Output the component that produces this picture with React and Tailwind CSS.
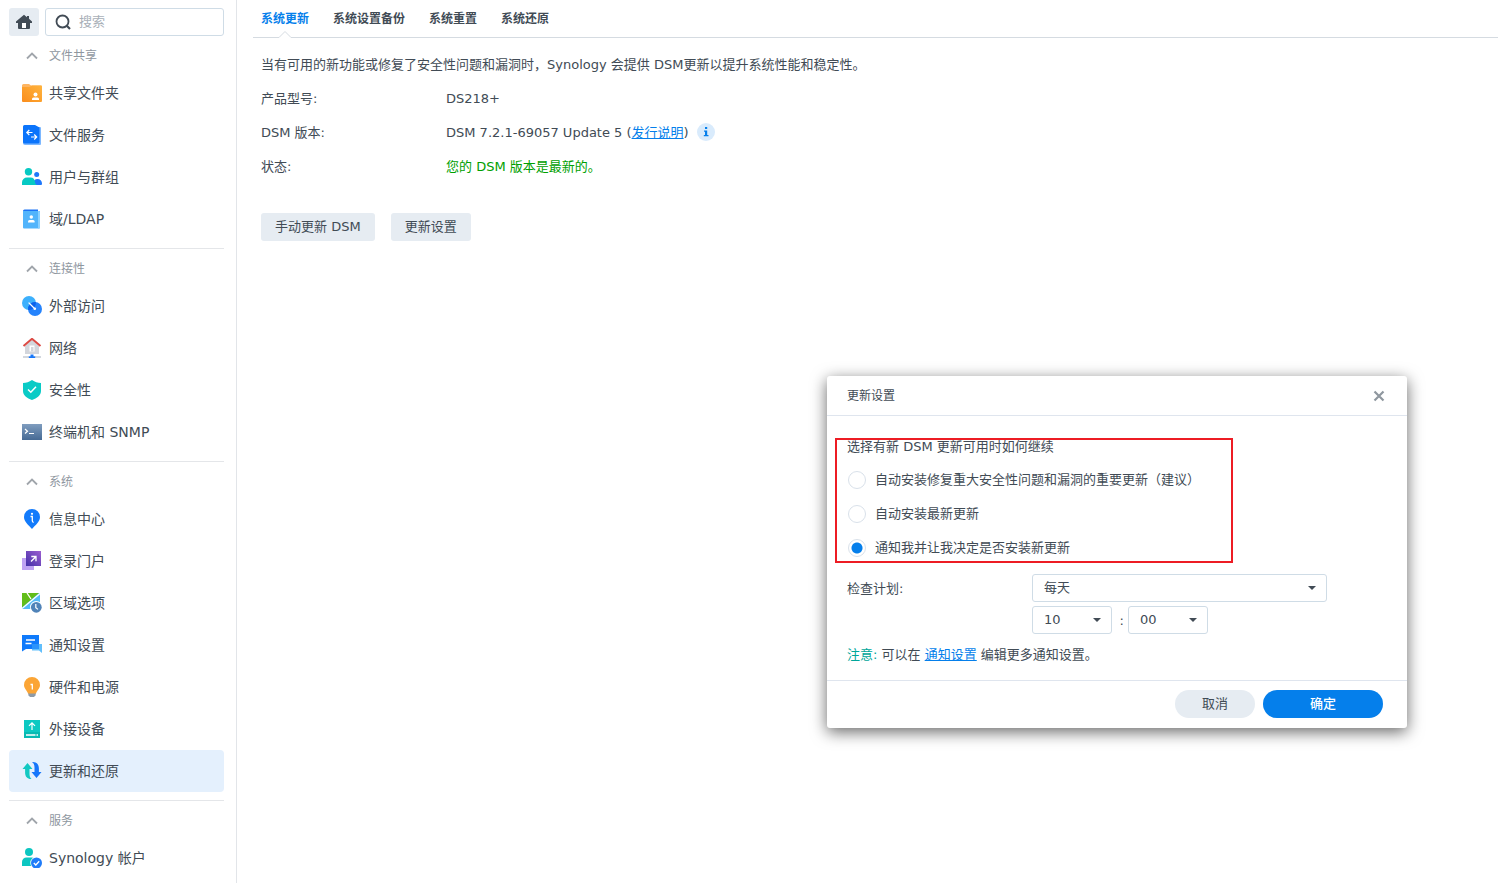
import { useState } from 'react'
import clsx from 'clsx'

/* Sidebar icons, all on a 20x20 grid */
function SharedFolderIcon() {
  return (
    <>
      <path d="M0 2.500A1.500 1.500 0 0 1 1.500 1H7l2 1.500h10.500V8H0z" fill="#fdb562" />
      <defs>
        <linearGradient id="folder" x1="0" y1="1" x2="1" y2="0">
          <stop offset="0" stopColor="#fa8d1c" />
          <stop offset="1" stopColor="#ffb43e" />
        </linearGradient>
      </defs>
      <path d="M0 4h7.500L10 2.500h9A1 1 0 0 1 20 3.500V18a1 1 0 0 1-1 1H1a1 1 0 0 1-1-1z" fill="url(#folder)" />
      <circle cx="13.500" cy="11.500" r="2" fill="#fff" />
      <path d="M10 17v-1a1.500 1.500 0 0 1 1.500-1.500h4A1.500 1.500 0 0 1 17 16v1z" fill="#fff" />
    </>
  )
}

function FileServiceIcon() {
  return (
    <>
      <path d="M3 2h15a1 1 0 0 1 1 1v16a1 1 0 0 1-1 1H3a2 2 0 0 1-2-2z" fill="#7db8ff" />
      <path d="M1 1.500A1.500 1.500 0 0 1 2.500 0H13l4.500 2.500V17a1.500 1.500 0 0 1-1.500 1.500H2.500A1.500 1.500 0 0 1 1 17z" fill="#0b74fb" />
      <path d="M10.500 7.500H5M7.300 5 4.800 7.500 7.300 10M9 12h5.500M12.200 9.500l2.500 2.500-2.500 2.500" fill="none" stroke="#fff" strokeWidth="1.200" />
    </>
  )
}

function UsersIcon() {
  return (
    <>
      <circle cx="6.500" cy="4.700" r="3.700" fill="#06c9c3" />
      <circle cx="14.700" cy="7.500" r="2.500" fill="#1f78fb" />
      <path d="M11 18v-1.500a4.500 4.500 0 0 1 4.500-4.500A4.500 4.500 0 0 1 20 16.500v.5a1 1 0 0 1-1 1z" fill="#1f78fb" />
      <path d="M0 18v-2.500A5 5 0 0 1 5 10.500h3.500c3 0 4.200 2 4.500 4.500.2 1.500.8 2.500 2 3z" fill="#06c9c3" />
    </>
  )
}

function LdapIcon() {
  return (
    <>
      <path d="M1 2A1.500 1.500 0 0 1 2.500.5H16V3H1z" fill="#1c74f6" />
      <path d="M1 2h17v16.500a1 1 0 0 1-1 1H2a1 1 0 0 1-1-1z" fill="#52b4fb" />
      <path d="M16 2h1a1 1 0 0 1 1 1v15.500a1 1 0 0 1-1 1h-1z" fill="#8bd0ff" />
      <circle cx="9.300" cy="8" r="1.700" fill="#fff" />
      <path d="M6 13.500V12.500A1.500 1.500 0 0 1 7.500 11h3.600a1.500 1.500 0 0 1 1.500 1.500v1z" fill="#fff" />
    </>
  )
}

function ExternalAccessIcon() {
  return (
    <>
      <circle cx="7" cy="7" r="7" fill="#3db0fc" />
      <circle cx="13" cy="13" r="7" fill="#2583fc" />
      <path d="M13.900 6.100A7 7 0 0 0 6.100 13.900 7 7 0 0 0 13.900 6.100z" fill="#0a62ec" />
      <path d="M7 7 12.500 12.500" stroke="#fff" strokeWidth="1.200" strokeLinecap="round" />
      <circle cx="12.800" cy="12.800" r="1.300" fill="#fff" />
    </>
  )
}

function NetworkIcon() {
  return (
    <>
      <path d="M3 8l7-6.500L17 8v8H3z" fill="#d3d6dc" />
      <path d="M7.500 7.500h5v6h-5z" fill="#fff" />
      <path d="M9 9h2.500v4.500H9z" fill="#d3d6dc" />
      <path d="M1.500 8 10 .8 18.500 8" fill="none" stroke="#dc4a44" strokeWidth="2" />
      <path d="M1 19h6M13 19h6" stroke="#c4cad3" strokeWidth="1.600" />
      <path d="M10 16.500V19" stroke="#1877f8" strokeWidth="3" />
      <path d="M6.800 19.200h6.400" stroke="#1877f8" strokeWidth="1.800" />
    </>
  )
}

function SecurityIcon() {
  return (
    <>
      <path d="M10 0c3 2 5.500 2.700 9 3v8c0 4.500-4 7-9 9-5-2-9-4.500-9-9V3c3.500-.3 6-1 9-3z" fill="#0acbc6" />
      <path d="m6 9.500 2.800 2.700L14 6.700" fill="none" stroke="#fff" strokeWidth="1.500" />
    </>
  )
}

function TerminalIcon() {
  return (
    <>
      <defs>
        <linearGradient id="term" x1="0" y1="1" x2="0" y2="0">
          <stop offset="0" stopColor="#466a94" />
          <stop offset="1" stopColor="#7f9dbf" />
        </linearGradient>
      </defs>
      <rect y="2" width="20" height="16" fill="url(#term)" />
      <path d="m3 7 2.500 2.200L3 11.500M7 11.500h5" fill="none" stroke="#fff" strokeWidth="1.200" />
    </>
  )
}

function InfoCenterIcon() {
  return (
    <>
      <path d="M10 0a8 8 0 0 1 8 8c0 4.800-4.500 8-8 12-3.500-4-8-7.200-8-12a8 8 0 0 1 8-8z" fill="#137bfb" />
      <circle cx="10" cy="4.800" r="1.100" fill="#fff" />
      <path d="M8.500 7.500h1.800v4.300c0 1 .4 1.500 1.400 1.500" fill="none" stroke="#fff" strokeWidth="1.300" />
    </>
  )
}

function PortalIcon() {
  return (
    <>
      <defs>
        <linearGradient id="portal" x1="0" y1="1" x2="1" y2="0">
          <stop offset="0" stopColor="#4330a8" />
          <stop offset="1" stopColor="#9c5fd0" />
        </linearGradient>
      </defs>
      <rect y="7" width="12" height="12" fill="#bfa3f3" />
      <rect x="4" width="15" height="15" fill="url(#portal)" />
      <path d="M9 10.500l4.500-4.500M9.300 5.500h4.700v4.700" fill="none" stroke="#fff" strokeWidth="1.300" />
    </>
  )
}

function RegionIcon() {
  return (
    <>
      <path d="M0 0h18v16H0z" fill="#55bbf8" />
      <path d="M0 0h17L0 14.500z" fill="#62bd19" />
      <path d="M5 0l4 6M18 .5 0 15.500" stroke="#fff" strokeWidth="1.300" />
      <circle cx="14.300" cy="14.300" r="6.300" fill="#fff" />
      <circle cx="14.300" cy="14.300" r="5.400" fill="#5083b8" />
      <path d="M13.800 11v3.600l2.200 1.800" fill="none" stroke="#fff" strokeWidth="1.200" />
    </>
  )
}

function NotificationIcon() {
  return (
    <>
      <path d="M0 0h17v14H4l-4 2.500z" fill="#0f7afb" />
      <path d="M10 9h10v9l-3-2.500h-7z" fill="#62bffc" />
      <path d="M10 9h7v5h-7z" fill="#2a93fb" />
      <path d="M4 5h9M3.500 8.500h6" stroke="#fff" strokeWidth="1.400" />
    </>
  )
}

function PowerIcon() {
  return (
    <>
      <path d="M6 16h8l-.5 2.300L12 20H8l-1.500-1.700z" fill="#8e9aa6" />
      <path d="M10 0a8 8 0 0 1 8 8c0 3.500-2.800 5-4 8.500H6C4.800 13 2 11.500 2 8a8 8 0 0 1 8-8z" fill="#fba536" />
      <path d="M8.500 7.500h1.800v5" fill="none" stroke="#fff" strokeWidth="1.300" />
    </>
  )
}

function DeviceIcon() {
  return (
    <>
      <path d="M2 1h16v12H2z" fill="#0cc9c2" />
      <path d="M2 13h16v6H2z" fill="#08bab3" />
      <path d="M10 11V4M7 6.800l3-3 3 3" fill="none" stroke="#fff" strokeWidth="1.200" />
      <path d="M4 16h9.500M14.500 16H16" stroke="#fff" strokeWidth="1.600" />
    </>
  )
}

function UpdateIcon() {
  return (
    <>
      <path d="M5.500 2 .5 8h2.600v3.500c0 4.500 2.600 6.800 6.400 6.500-1.500-1.300-2-3-2-5.500V8h3z" fill="#12c8c2" />
      <path d="M14.500 17l5-6h-2.600V7.500C16.900 3 14 .5 10 1c1.800 1.300 2.500 3 2.500 5.500V11h-3z" fill="#1676fb" />
    </>
  )
}

function AccountIcon() {
  return (
    <>
      <circle cx="7" cy="4" r="4" fill="#0cc6c1" />
      <path d="M0 18V14a4.500 4.500 0 0 1 4.500-4.500h5A4.500 4.500 0 0 1 14 14v4z" fill="#0cc6c1" />
      <circle cx="14.500" cy="15" r="6.200" fill="#fff" />
      <circle cx="14.500" cy="15" r="5.500" fill="#1f7cf9" />
      <path d="m11.800 15 2 2 3.400-3.700" fill="none" stroke="#fff" strokeWidth="1.300" />
    </>
  )
}

const groups = [
  {
    title: '文件共享',
    items: [
      { label: '共享文件夹', icon: SharedFolderIcon },
      { label: '文件服务', icon: FileServiceIcon },
      { label: '用户与群组', icon: UsersIcon },
      { label: '域/LDAP', icon: LdapIcon },
    ],
  },
  {
    title: '连接性',
    items: [
      { label: '外部访问', icon: ExternalAccessIcon },
      { label: '网络', icon: NetworkIcon },
      { label: '安全性', icon: SecurityIcon },
      { label: '终端机和 SNMP', icon: TerminalIcon },
    ],
  },
  {
    title: '系统',
    items: [
      { label: '信息中心', icon: InfoCenterIcon },
      { label: '登录门户', icon: PortalIcon },
      { label: '区域选项', icon: RegionIcon },
      { label: '通知设置', icon: NotificationIcon },
      { label: '硬件和电源', icon: PowerIcon },
      { label: '外接设备', icon: DeviceIcon },
      { label: '更新和还原', icon: UpdateIcon },
    ],
  },
  {
    title: '服务',
    items: [{ label: 'Synology 帐户', icon: AccountIcon }],
  },
]

const tabs = ['系统更新', '系统设置备份', '系统重置', '系统还原']

const policies = [
  '自动安装修复重大安全性问题和漏洞的重要更新（建议）',
  '自动安装最新更新',
  '通知我并让我决定是否安装新更新',
]

function Sidebar({ active, onSelect }) {
  return (
    <aside className="w-[237px] shrink-0 border-r border-[#e2e5e9] pl-[9px] pr-3 pt-2">
      <div className="flex h-7 gap-1.5">
        <button aria-label="主页" className="flex w-[30px] items-center justify-center rounded-[3px] bg-[#e6ecf2]">
          <svg viewBox="0 0 16 16" className="h-4 w-4" fill="#414b55">
            <path d="M8 .8 0 7.500V9h2v5a1 1 0 0 0 1 1h10a1 1 0 0 0 1-1V9h2V7.500L13 4.700V2h-2v1.200z" />
            <path d="M6 9h4v5H6z" fill="#fff" />
          </svg>
        </button>
        <label className="flex min-w-0 flex-1 items-center gap-2 rounded-[3px] border border-[#cfdce6] pl-[9px]">
          <svg viewBox="0 0 16 16" className="h-4 w-4 shrink-0" fill="none" stroke="#414b55">
            <circle cx="7.500" cy="7.500" r="6" strokeWidth="1.800" />
            <path d="m11.800 11.800 3.200 3.200" strokeWidth="2.200" />
          </svg>
          <input
            type="text"
            aria-label="搜索"
            placeholder="搜索"
            className="w-full min-w-0 text-[13px] outline-none placeholder:text-[#a9b0b8]"
          />
        </label>
      </div>
      <nav>
        {groups.map((group, i) => (
          <section key={group.title} className={clsx(i > 0 && 'mt-2 border-t border-[#e4e6e9]')}>
            <h2 className="flex h-9 items-center gap-[11px] pl-[17px] pt-1 text-xs text-[#8f979f]">
              <svg viewBox="0 0 12 12" className="h-3 w-3" fill="none" stroke="#a0a5ab" strokeWidth="1.800">
                <path d="m1 8.500 5-5 5 5" />
              </svg>
              {group.title}
            </h2>
            {group.items.map(({ label, icon: Icon }) => (
              <button
                key={label}
                onClick={() => onSelect(label)}
                className={clsx(
                  'flex h-[42px] w-full items-center gap-[7px] rounded-[4px] pl-[13px] text-sm',
                  active === label && 'bg-[#e4f0fd]'
                )}
              >
                <svg viewBox="0 0 20 20" className="h-5 w-5 shrink-0">
                  <Icon />
                </svg>
                {label}
              </button>
            ))}
          </section>
        ))}
      </nav>
    </aside>
  )
}

function Row({ label, children }) {
  return (
    <div className="flex min-h-7 items-center">
      <dt className="w-[185px] shrink-0">{label}</dt>
      <dd className="flex items-start">{children}</dd>
    </div>
  )
}

function Select({ label, options, className }) {
  return (
    <div className={clsx('relative h-7', className)}>
      <select
        aria-label={label}
        className="h-full w-full appearance-none rounded-[3px] border border-[#cfdce6] bg-white pl-[11px] text-[13px]"
      >
        {options.map(o => <option key={o}>{o}</option>)}
      </select>
      <svg viewBox="0 0 8 4" className="pointer-events-none absolute right-[11px] top-3 h-1 w-2" fill="#414b55">
        <path d="M0 0h8L4 4z" />
      </svg>
    </div>
  )
}

function UpdateDialog({ onClose }) {
  const [policy, setPolicy] = useState(2)

  return (
    <div
      role="dialog"
      aria-labelledby="dialog-title"
      className="absolute bottom-[155px] right-[91px] w-[580px] rounded-[3px] bg-white shadow-[0_4px_16px_rgba(0,0,0,0.6)]"
    >
      <header className="flex h-10 items-center justify-between border-b border-[#dfe5ee] pl-5 pr-[22px]">
        <h2 id="dialog-title" className="text-xs">更新设置</h2>
        <button aria-label="关闭" onClick={onClose}>
          <svg viewBox="0 0 12 12" className="h-3 w-3" stroke="#8f979f" strokeWidth="2.200">
            <path d="m1.500 1.500 9 9m0-9-9 9" />
          </svg>
        </button>
      </header>

      <div className="relative px-5 pb-3 pt-4">
        <fieldset className="space-y-1.5">
          <legend className="mb-1.5 h-7 leading-[30px]">选择有新 DSM 更新可用时如何继续</legend>
          {policies.map((text, i) => (
            <label key={text} className="flex h-7 items-center gap-[9px] pl-px">
              <input
                type="radio"
                name="policy"
                checked={policy === i}
                onChange={() => setPolicy(i)}
                className="h-[18px] w-[18px] shrink-0 appearance-none rounded-full border border-[#d9e1ea] bg-white checked:bg-[radial-gradient(circle,#057feb_5px,transparent_6px)]"
              />
              {text}
            </label>
          ))}
        </fieldset>
        {/* highlight around the update policy */}
        <div className="pointer-events-none absolute left-2 top-[22px] h-[125px] w-[398px] border-2 border-[#ed1c24]" />

        <div className="mt-3 flex">
          <span className="w-[185px] shrink-0 leading-[30px]">检查计划:</span>
          <div className="space-y-1">
            <Select label="检查计划" options={['每天', '每周']} className="w-[295px]" />
            <div className="flex h-7">
              <Select label="时" options={['10', '11', '12']} className="w-20" />
              <span className="w-4 pr-1 text-right leading-[30px]">:</span>
              <Select label="分" options={['00', '30']} className="w-20" />
            </div>
          </div>
        </div>
        <p className="mt-1.5 h-7 leading-[30px]">
          <span className="text-[#00a69a]">注意:</span> 可以在{' '}
          <a href="#notification" className="text-[#057feb] underline">通知设置</a> 编辑更多通知设置。
        </p>
      </div>

      <footer className="flex justify-end gap-2 border-t border-[#dfe5ee] pb-2.5 pr-6 pt-[9px]">
        <button onClick={onClose} className="h-7 w-20 rounded-full bg-[#e6ecf2]">取消</button>
        <button onClick={onClose} className="h-7 w-[120px] rounded-full bg-[#057feb] font-medium text-white">确定</button>
      </footer>
    </div>
  )
}

export default function App() {
  const [page, setPage] = useState('更新和还原')
  const [tab, setTab] = useState(tabs[0])
  const [open, setOpen] = useState(true)

  return (
    <div className="relative flex min-h-screen bg-white font-['DejaVu_Sans','Noto_Sans_CJK_SC',sans-serif] text-[13px] text-[#414b55]">
      <Sidebar active={page} onSelect={setPage} />

      <main className="min-w-0 flex-1 pl-4">
        <div role="tablist" className="flex h-[38px] gap-6 border-b border-[#d5dbe1] pl-2">
          {tabs.map(t => (
            <button
              key={t}
              role="tab"
              aria-selected={tab === t}
              onClick={() => setTab(t)}
              className={clsx('relative text-xs font-bold', tab === t && 'text-[#057feb]')}
            >
              {t}
              {tab === t && (
                <svg viewBox="0 0 12 7" className="absolute -bottom-px left-1/2 h-[7px] w-3 -translate-x-1/2">
                  <path d="M0 6.500 6 .5l6 6V7H0z" fill="#fff" />
                  <path d="M0 6.500 6 .5l6 6" fill="none" stroke="#d5dbe1" />
                </svg>
              )}
            </button>
          ))}
        </div>

        <div className="px-2 pt-[13px]">
          <p className="leading-7">当有可用的新功能或修复了安全性问题和漏洞时，Synology 会提供 DSM更新以提升系统性能和稳定性。</p>
          <dl className="mt-1.5 space-y-1.5">
            <Row label="产品型号:">DS218+</Row>
            <Row label="DSM 版本:">
              <span>
                DSM 7.2.1-69057 Update 5 (
                <a href="#release-notes" className="text-[#057feb] underline">发行说明</a>)
              </span>
              <svg viewBox="0 0 18 18" className="ml-2 h-[18px] w-[18px]">
                <circle cx="9" cy="9" r="9" fill="#d9ebfc" />
                <path d="M8 4h2.200v2H8zM7 7.500h3.200V12H11.500v1.300H6.800V12H8V8.800H7z" fill="#057feb" />
              </svg>
            </Row>
            <Row label="状态:">
              <span className="text-[#00a000]">您的 DSM 版本是最新的。</span>
            </Row>
          </dl>
          <div className="mt-8 flex gap-4">
            <button className="h-7 rounded-[3px] bg-[#e6ecf2] px-3.5">手动更新 DSM</button>
            <button onClick={() => setOpen(true)} className="h-7 rounded-[3px] bg-[#e6ecf2] px-3.5">更新设置</button>
          </div>
        </div>
      </main>

      {open && <UpdateDialog onClose={() => setOpen(false)} />}
    </div>
  )
}
